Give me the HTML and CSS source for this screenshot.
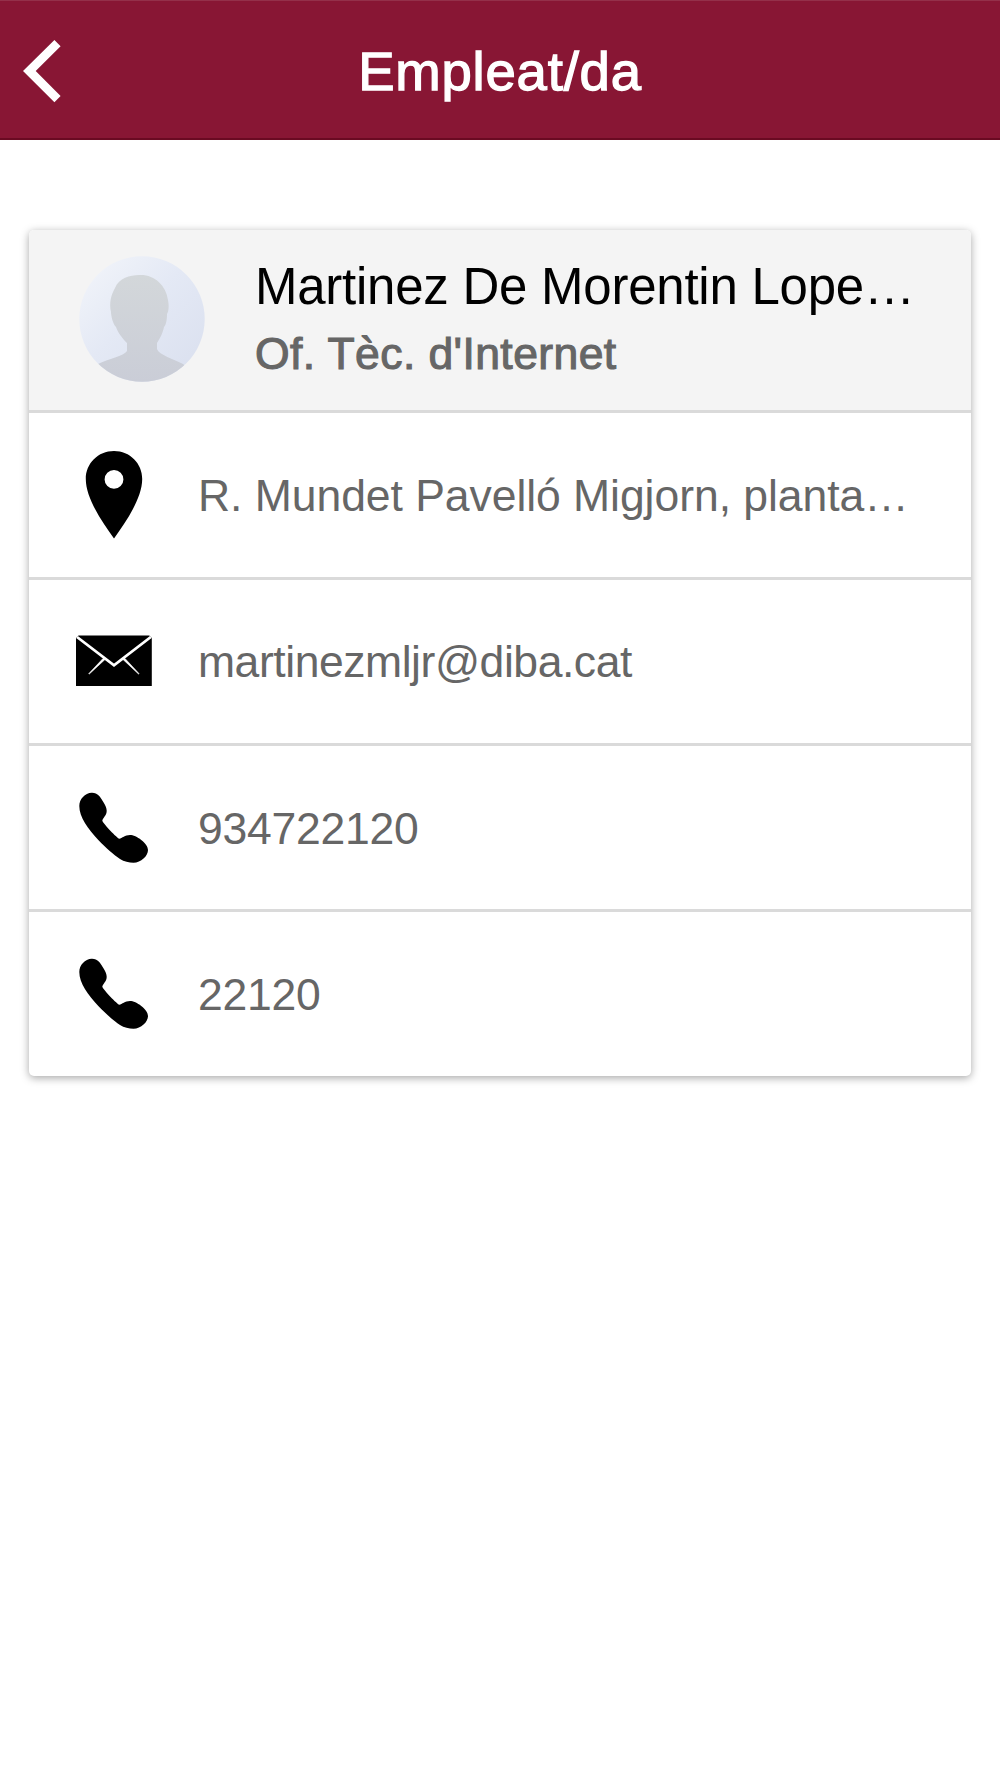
FILE: index.html
```html
<!DOCTYPE html>
<html lang="ca">
  <head>
    <meta charset="UTF-8" />
    <meta name="viewport" content="width=device-width, initial-scale=1.0" />
    <title>Empleat/da</title>
    <link rel="stylesheet" href="styles.css">
  </head>
  <body>
    <header class="bar">
      <a class="back" href="#" aria-label="Enrere">
        <svg width="38" height="63" viewBox="0 0 38 63">
          <path d="M31.4 0 L37.6 6.2 L12.7 31.1 L37.6 56 L31.4 62.3 L0 31.1 Z" fill="#fff" />
        </svg>
      </a>
      <h1 class="bar-title">Empleat/da</h1>
    </header>

    <main class="card">
      <div class="item item-avatar">
        <svg class="avatar" viewBox="0 0 126 126">
          <defs>
            <linearGradient id="sky" x1="0" y1="0" x2="1" y2="1">
              <stop offset="0.1" stop-color="#f0f3f9" />
              <stop offset="0.45" stop-color="#e4e9f5" />
              <stop offset="1" stop-color="#d9dfee" />
            </linearGradient>
            <linearGradient id="person" x1="0" y1="0" x2="0" y2="1">
              <stop offset="0" stop-color="#d3d7da" />
              <stop offset="1" stop-color="#cacdd7" />
            </linearGradient>
            <clipPath id="round"><circle cx="63" cy="63" r="62.7" /></clipPath>
          </defs>
          <g clip-path="url(#round)">
            <rect width="126" height="126" fill="url(#sky)" />
            <path d="M60 19 C75 18 87 29 89 44 C90 49 90 55 88 58 C88 64 87 69 85 71 C84 77 80 84 78 87 L78 93 C80 99 95 103 104 108 L126 126 L0 126 L19 108 C29 103 45 100 48 95 L48 87 C44 83 39 77 37 71 C34 68 32 60 32 56 C30 47 32 39 36 32 C40 22 51 19 60 19 Z" fill="url(#person)" />
          </g>
        </svg>
        <div class="info">
          <h2 class="name">Martinez De Morentin Lope…</h2>
          <p class="job">Of. Tèc. d'Internet</p>
        </div>
      </div>

      <div class="item">
        <svg class="icon" viewBox="0 0 76 88">
          <path fill-rule="evenodd" d="M38 0 C22 0 9.8 12.5 9.8 28 C9.8 47 26 71 38 87.5 C50 71 66.2 47 66.2 28 C66.2 12.5 54 0 38 0 Z M38 19 A9.4 9.4 0 1 1 38 37.8 A9.4 9.4 0 1 1 38 19 Z" />
        </svg>
        <span class="text">R. Mundet Pavelló Migjorn, planta…</span>
      </div>

      <a class="item" href="#">
        <svg class="icon" viewBox="0 0 76 88">
          <path d="M2.5 18.5 H73.3 L75.8 21 V69 H0 V21 Z" />
          <path d="M1 20 L38 48.3 L74.8 20" fill="none" stroke="#fff" stroke-width="2.8" />
          <path d="M28 41 L27 41.5 L12.7 56.7 L13.3 57 L29 42.5 Z M48 41 L49 41.5 L63.1 56.7 L62.5 57 L47 42.5 Z" fill="#fff" stroke="#fff" stroke-width="0.6" />
        </svg>
        <span class="text mail">martinezmljr@diba.cat</span>
      </a>

      <a class="item" href="#">
        <svg class="icon" viewBox="0 0 76 88">
          <path d="M15.7 8.7 C9 9 3.3 15 3.3 22 C3.3 33 12 45 22.3 56 C30 64 38 71 44 75 C48 77.6 53 78.7 57.5 78.7 C65 78.7 72 72 72 66 C72 59 60 51 54 51 C49 51 46 54.3 43.3 54.7 C41 54 27.5 40 26.3 36.7 C27 33.5 30.7 31.5 30.7 26.7 C30.7 22 25.5 15 23 11.8 C21 9.6 18.5 8.6 15.7 8.7 Z" />
        </svg>
        <span class="text phone">934722120</span>
      </a>

      <a class="item" href="#">
        <svg class="icon" viewBox="0 0 76 88">
          <path d="M15.7 8.7 C9 9 3.3 15 3.3 22 C3.3 33 12 45 22.3 56 C30 64 38 71 44 75 C48 77.6 53 78.7 57.5 78.7 C65 78.7 72 72 72 66 C72 59 60 51 54 51 C49 51 46 54.3 43.3 54.7 C41 54 27.5 40 26.3 36.7 C27 33.5 30.7 31.5 30.7 26.7 C30.7 22 25.5 15 23 11.8 C21 9.6 18.5 8.6 15.7 8.7 Z" />
        </svg>
        <span class="text phone">22120</span>
      </a>
    </main>
  </body>
</html>
```
FILE: styles.css
```css
* {
  box-sizing: border-box;
}
body {
  margin: 0;
  min-height: 100vh;
  background-color: #fff;
  font-family: "Liberation Sans", Arial, sans-serif;
}
.bar {
  display: grid;
  grid-template-columns: 100px 1fr 100px;
  align-items: center;
  height: 140px;
  background-color: #881634;
  border-top: 1px solid #94304a;
  border-bottom: 2px solid #6a0a22;
}
.back {
  display: flex;
  padding: 3px 0 0 23px;
}
.bar-title {
  margin: 0;
  padding-top: 5px;
  text-align: center;
  font-size: 54.5px;
  font-weight: normal;
  line-height: 64px;
  letter-spacing: 0.8px;
  color: #fff;
  -webkit-text-stroke: 1.3px #fff;
}
.card {
  margin: 90px 29px 0;
  border-radius: 5px;
  overflow: hidden;
  background-color: #fff;
  box-shadow: 0 2px 8px rgba(0, 0, 0, 0.35);
}
.item {
  display: flex;
  align-items: center;
  gap: 46px;
  height: 166.4px;
  padding: 0 47px;
  border-bottom: 3px solid #dadada;
  color: #666;
  text-decoration: none;
}
.item:last-child {
  height: 163.4px;
  border-bottom: none;
}
.item-avatar {
  height: 183.2px;
  padding: 0 50px 2px;
  gap: 50px;
  background-color: #f4f4f4;
}
.avatar {
  width: 126px;
  height: 126px;
}
.name,
.job {
  margin: 0;
  font-weight: normal;
  white-space: nowrap;
}
.name {
  padding-top: 3px;
  font-size: 51px;
  line-height: 66px;
  letter-spacing: -0.25px;
  color: #000;
}
.job {
  font-size: 44.5px;
  line-height: 68px;
  letter-spacing: 0.4px;
  -webkit-text-stroke: 1.1px #666;
}
.icon {
  flex: none;
  width: 76px;
  height: 88px;
}
.text {
  padding-top: 2px;
  font-size: 44.5px;
  line-height: 60px;
  white-space: nowrap;
  letter-spacing: -0.05px;
}
.mail {
  letter-spacing: -0.45px;
}
.phone {
  letter-spacing: -0.25px;
}
```
